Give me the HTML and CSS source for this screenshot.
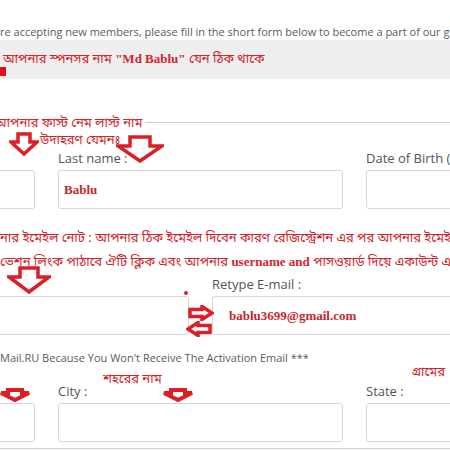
FILE: index.html
```html
<!DOCTYPE html>
<html lang="en">
<head>
<meta charset="utf-8">
<title>Registration</title>
<link rel="stylesheet" href="styles.css">
</head>
<body>
<div class="page">
  <p class="intro">re accepting new members, please fill in the short form below to become a part of our g</p>
  <div class="band">
    <span class="bn">আপনার স্পনসর নাম <b class="lat">"Md Bablu"</b> যেন ঠিক  থাকে</span>
  </div>

  <div class="divider"></div>

  <div class="row row3 row-first">
    <div class="field"><label class="label">First name :</label><input class="input" type="text"></div>
    <div class="field"><label class="label">Last name :</label><input class="input filled" type="text" value="Bablu"></div>
    <div class="field"><label class="label">Date of Birth (MM/DD/YYYY) :</label><input class="input" type="text"></div>
  </div>

  <div class="notes">
    <p class="bn note-line">নার ইমেইল নোট : আপনার ঠিক ইমেইল দিবেন কারণ রেজিস্ট্রেশন এর  পর আপনার ইমেইল</p>
    <p class="bn note-line">ভেশন লিংক পাঠাবে  ঐটি ক্লিক এবং আপনার <b class="lat">username and</b> পাসওয়ার্ড দিয়ে একাউন্ট এ</p>
  </div>

  <div class="row row2">
    <div class="field"><label class="label">E-mail :</label><input class="input" type="text"></div>
    <div class="field"><label class="label">Retype E-mail :</label><input class="input filled mail" type="text" value="bablu3699@gmail.com"></div>
  </div>

  <p class="warn">Mail.RU Because You Won't Receive The Activation Email ***</p>

  <div class="row row3 row-last">
    <div class="field"><label class="label">Zip :</label><input class="input" type="text"></div>
    <div class="field"><label class="label">City :</label><input class="input" type="text"></div>
    <div class="field"><label class="label">State :</label><input class="input" type="text"></div>
  </div>

  <div class="bottom-line"></div>

  <!-- annotations drawn over the form -->
  <span class="mark square"></span>
  <span class="bn ann ann-name">আপনার  ফাস্ট নেম লাস্ট  নাম</span>
  <span class="bn ann ann-example">উদাহরণ যেমনঃ</span>
  <span class="bn ann ann-city">শহরের নাম</span>
  <span class="bn ann ann-village">গ্রামের</span>
  <span class="mark dot"></span>

  <svg class="mark arrow-a" width="30" height="24" viewBox="0 0 30 24"><path d="M9 2H21V10H28L15 22L2 10H9Z"/></svg>
  <svg class="mark arrow-b" width="48" height="28" viewBox="0 0 48 28"><path d="M14 2H34V11H46L24 26L2 11H14Z"/></svg>
  <svg class="mark arrow-c" width="44" height="28" viewBox="0 0 44 28"><path d="M13 2H31V11H42L22 26L2 11H13Z"/></svg>
  <svg class="mark arrow-r" width="26" height="16" viewBox="0 0 26 16"><path d="M2 4.5H14V1.5L24 8L14 14.5V11.5H2Z"/></svg>
  <svg class="mark arrow-l" width="26" height="16" viewBox="0 0 26 16"><path d="M24 4.5H12V1.5L2 8L12 14.5V11.5H24Z"/></svg>
  <svg class="mark arrow-s1" width="32" height="14" viewBox="0 0 32 14"><path d="M9 2H23V5H30L16 12L2 5H9Z"/></svg>
  <svg class="mark arrow-s2" width="32" height="14" viewBox="0 0 32 14"><path d="M9 2H23V5H30L16 12L2 5H9Z"/></svg>
</div>
</body>
</html>
```

FILE: styles.css
```css
html, body {
  margin: 0;
  padding: 0;
  background: #fff;
}

body {
  width: 450px;
  height: 450px;
  overflow: hidden;
  font-family: "Open Sans", "Noto Sans", sans-serif;
  color: #555;
}

.page {
  position: relative;
  width: 450px;
  height: 450px;
  overflow: hidden;
}

.intro {
  margin: 0;
  padding-top: 24px;
  font-size: 11px;
  line-height: 16px;
  white-space: nowrap;
  color: #5a5a5a;
}

.bn {
  font-family: "Noto Sans Bengali", "Noto Serif Bengali", "Lohit Bengali", "FreeSerif", "Noto Sans", sans-serif;
  color: #d3242c;
}

.lat {
  font-family: "Liberation Serif", serif;
  font-weight: bold;
}

.band {
  height: 39px;
  background: #eeeeee;
  display: flex;
  align-items: flex-start;
  padding-left: 3px;
  box-sizing: border-box;
  padding-top: 10px;
  font-size: 13px;
  line-height: 18px;
  white-space: nowrap;
}

.divider {
  margin-top: 43px;
  border-top: 1px solid #cfcfcf;
}

.row {
  display: grid;
  column-gap: 23px;
  margin-left: -250px;
}

.row3 {
  grid-template-columns: repeat(3, 285px);
}

.row-first {
  margin-top: 25px;
}

.row-last {
  margin-top: 15px;
}

.row2 {
  grid-template-columns: 439px 439px;
  margin-top: 0;
}

.field {
  display: flex;
  flex-direction: column;
  gap: 2px;
}

.label {
  font-size: 13px;
  line-height: 20px;
  color: #555;
  white-space: nowrap;
}

.input {
  height: 39px;
  box-sizing: border-box;
  border: 1px solid #d6d6d6;
  border-radius: 3px;
  background: #fff;
  margin: 0;
  padding: 0 0 0 5px;
  outline: none;
  font-family: "Liberation Serif", serif;
  font-weight: bold;
  font-size: 13px;
  color: #c8262c;
}

.input.mail {
  padding-left: 16px;
}

.notes {
  margin-top: 18px;
}

.note-line {
  margin: 0;
  font-size: 13px;
  line-height: 23px;
  white-space: nowrap;
}

.warn {
  margin: 15px 0 0;
  font-size: 11px;
  line-height: 16px;
  white-space: nowrap;
  color: #5a5a5a;
}

.bottom-line {
  margin-top: 6px;
  border-top: 1px solid #cfcfcf;
}

/* annotations */
.ann,
.mark {
  position: absolute;
}

.ann {
  white-space: nowrap;
  font-size: 13px;
  line-height: 18px;
}

.ann-name {
  left: -5px;
  top: 115px;
  font-size: 13px;
  background: #fff;
  padding-right: 3px;
}

.ann-example {
  left: 40px;
  top: 133px;
  font-size: 13px;
  line-height: 16px;
}

.ann-city {
  left: 103px;
  top: 371px;
}

.ann-village {
  left: 412px;
  top: 364px;
}

.square {
  left: 0;
  top: 67px;
  width: 6px;
  height: 9px;
  background: #e0101c;
}

.dot {
  left: 184px;
  top: 291px;
  width: 4px;
  height: 4px;
  border-radius: 50%;
  background: #d3242c;
}

.mark path {
  fill: #fff;
  stroke: #dc1f27;
  stroke-width: 3.5;
  stroke-linejoin: miter;
}

.arrow-a { left: 9px; top: 132px; }
.arrow-b { left: 116px; top: 135px; }
.arrow-c { left: 7px; top: 266px; }
.arrow-r { left: 188px; top: 305px; }
.arrow-l { left: 186px; top: 321px; }
.arrow-s1 { left: -1px; top: 388px; }
.arrow-s2 { left: 162px; top: 388px; }

.arrow-s1 path,
.arrow-s2 path {
  stroke-width: 4;
}
```
